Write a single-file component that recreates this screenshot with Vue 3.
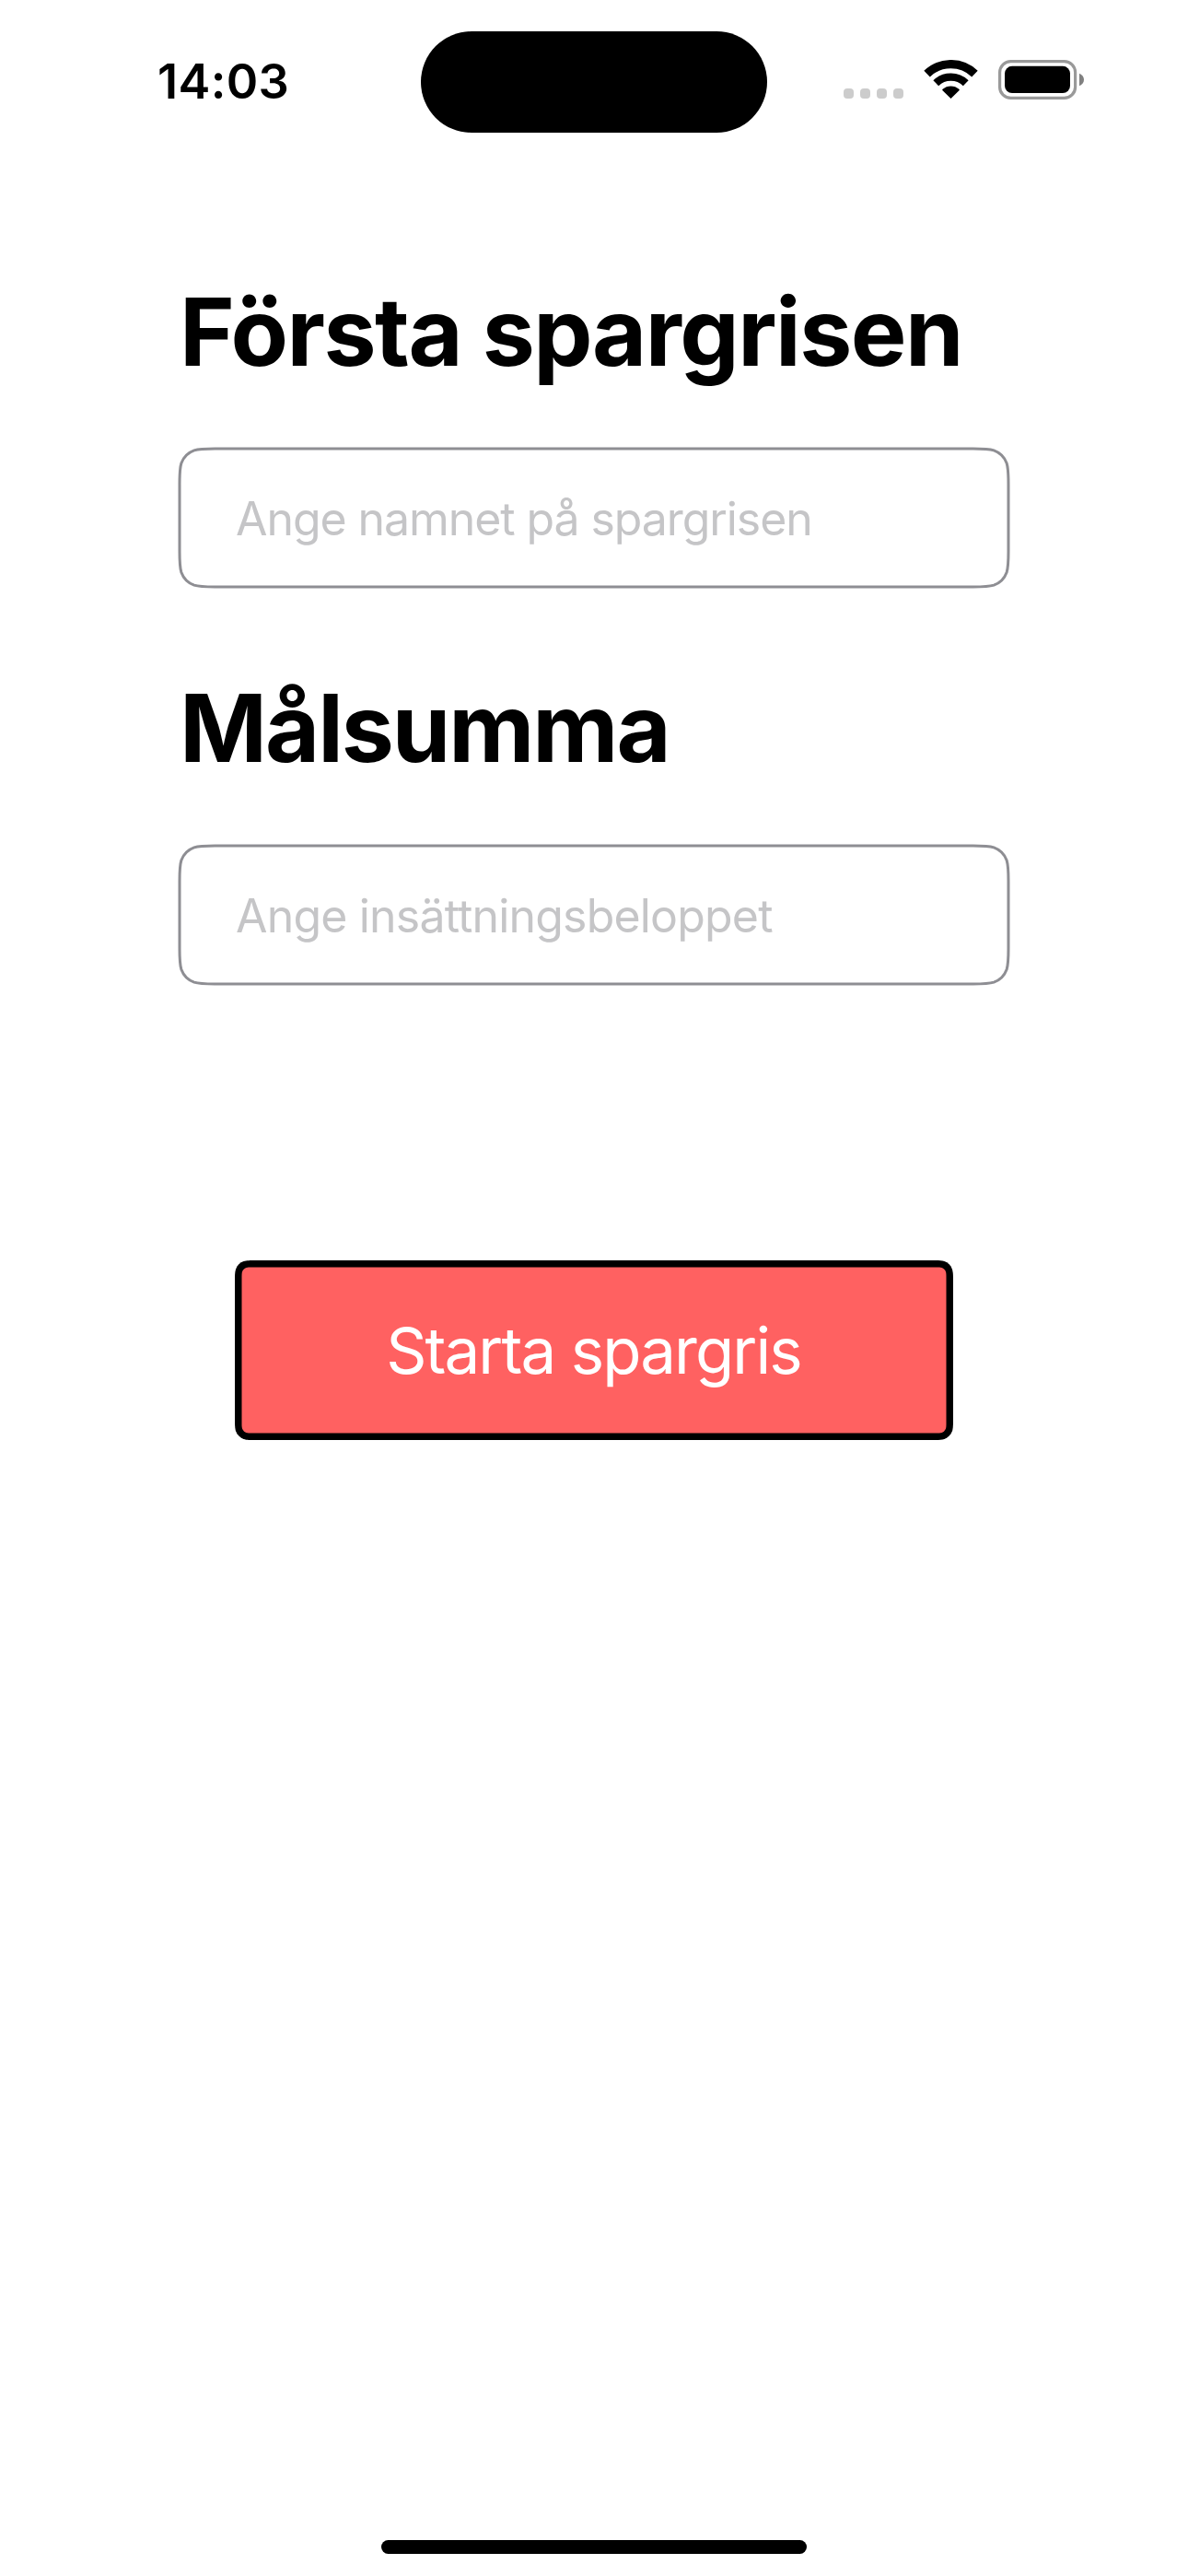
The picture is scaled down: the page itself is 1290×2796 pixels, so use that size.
<script setup>
// Rounded rectangle with continuous (smoothed) corners
function smoothRect(x, y, w, h, r) {
  const [a, b, c, d, e, f, g] = [1.528665, 1.088493, 0.868407, 0.631494, 0.372824, 0.16906, 0.074911].map((k) => k * r)
  const R = x + w
  const B = y + h
  return [
    `M${x + a} ${y}H${R - a}`,
    `C${R - b} ${y} ${R - c} ${y} ${R - d} ${y + g}`,
    `C${R - e} ${y + f} ${R - f} ${y + e} ${R - g} ${y + d}`,
    `C${R} ${y + c} ${R} ${y + b} ${R} ${y + a}V${B - a}`,
    `C${R} ${B - b} ${R} ${B - c} ${R - g} ${B - d}`,
    `C${R - f} ${B - e} ${R - e} ${B - f} ${R - d} ${B - g}`,
    `C${R - c} ${B} ${R - b} ${B} ${R - a} ${B}H${x + a}`,
    `C${x + b} ${B} ${x + c} ${B} ${x + d} ${B - g}`,
    `C${x + e} ${B - f} ${x + f} ${B - e} ${x + g} ${B - d}`,
    `C${x} ${B - c} ${x} ${B - b} ${x} ${B - a}V${y + a}`,
    `C${x} ${y + b} ${x} ${y + c} ${x + g} ${y + d}`,
    `C${x + f} ${y + e} ${x + e} ${y + f} ${x + d} ${y + g}`,
    `C${x + c} ${y} ${x + b} ${y} ${x + a} ${y}Z`,
  ].join('')
}

const fieldOutline = smoothRect(0, 0, 900, 150, 25)
const buttonOutline = smoothRect(0, 0, 780, 195, 15)
const buttonFace = smoothRect(7.5, 7.5, 765, 180, 7.5)
</script>

<template>
  <div class="screen">
    <header class="status">
      <span class="time">14:03</span>
      <span class="island"></span>
      <div class="indicators">
        <div class="dots"><i v-for="n in 4" :key="n"></i></div>
        <svg class="wifi" width="59" height="42" viewBox="0 0 59 42">
          <path d="M3.55 15.13A37.35 37.35 0 0 1 55.45 15.13" fill="none" stroke="#000" stroke-width="9.3" />
          <path d="M13.28 25.2A23.35 23.35 0 0 1 45.72 25.2" fill="none" stroke="#000" stroke-width="8.4" />
          <path d="M29.5 42L20.3 32.9Q20 32.3 20.6 31.8A13.5 13.5 0 0 1 38.4 31.8Q39 32.3 38.7 32.9Z" />
        </svg>
        <svg class="battery" width="94" height="43" viewBox="0 0 94 43">
          <rect x="1.6" y="1.6" width="82" height="39.8" rx="12" fill="none" stroke="#999" stroke-width="3.2" />
          <rect x="7" y="6.8" width="71" height="29.2" rx="8" />
          <path d="M88 14.7C91.2 16 93 18.500 93 21.500S91.200 27 88 28.300Z" fill="#808080" />
        </svg>
      </div>
    </header>

    <main class="form">
      <h1 class="title first">Första spargrisen</h1>
      <div class="field">
        <svg class="outline" width="900" height="150"><path :d="fieldOutline" /></svg>
        <span class="hint name">Ange namnet på spargrisen</span>
      </div>
      <h1 class="title goal">Målsumma</h1>
      <div class="field">
        <svg class="outline" width="900" height="150"><path :d="fieldOutline" /></svg>
        <span class="hint amount">Ange insättningsbeloppet</span>
      </div>
      <button class="start" type="button">
        <svg class="plate" width="780" height="195">
          <path :d="buttonOutline" fill="#000" />
          <path :d="buttonFace" fill="#ff6161" />
        </svg>
        <span class="label">Starta spargris</span>
      </button>
    </main>

    <div class="home"></div>
  </div>
</template>

<style>
body {
  background: #fff;
}
</style>

<style scoped>
.screen {
  box-sizing: border-box;
  width: 1290px;
  height: 2796px;
  padding-bottom: 24px;
  display: flex;
  flex-direction: column;
  background: #fff;
  color: #000;
  font-family: Inter, sans-serif;
  overflow: hidden;
}
.status {
  display: flex;
  align-items: flex-start;
  height: 177px;
  flex: none;
}
.time {
  width: 286px;
  margin-top: 56px;
  padding-left: 171px;
  line-height: 64px;
  font-size: 52.3px;
  font-weight: 600;
  letter-spacing: 0.35px;
  white-space: nowrap;
}
.island {
  width: 376px;
  height: 110px;
  margin-top: 34px;
  border-radius: 55px;
  background: #000;
}
.indicators {
  display: flex;
  align-items: flex-start;
  margin: 65px 0 0 83px;
}
.dots {
  display: flex;
  gap: 7px;
  margin-top: 31px;
}
.dots i {
  width: 11px;
  height: 11px;
  border-radius: 4px;
  background: #ccc;
}
.wifi {
  margin-left: 22px;
}
.battery {
  margin-left: 22px;
}
.form {
  width: 900px;
  margin-left: 195px;
  display: flex;
  flex-direction: column;
}
.title {
  margin: 0;
  line-height: 122px;
  font-size: 102px;
  font-weight: 700;
  white-space: nowrap;
}
.first {
  margin-top: 122px;
  letter-spacing: -1.52px;
}
.goal {
  margin-top: 92px;
  letter-spacing: -2.04px;
}
.field {
  position: relative;
  display: flex;
  align-items: center;
  height: 150px;
  margin-top: 66px;
  padding-left: 61px;
}
.goal + .field {
  margin-top: 67px;
}
.outline {
  position: absolute;
  inset: 0;
  overflow: visible;
  fill: none;
  stroke: #8e8e93;
  stroke-width: 3px;
}
.hint {
  line-height: 62px;
  padding-top: 2px;
  color: #c5c5c7;
  font-size: 50px;
  white-space: nowrap;
}
.name {
  letter-spacing: -1.08px;
}
.amount {
  letter-spacing: -0.82px;
}
.start {
  position: relative;
  display: flex;
  align-items: center;
  justify-content: center;
  width: 780px;
  height: 195px;
  margin: 300px auto 0;
  padding: 0;
  border: 0;
  background: none;
  color: #fff;
  font-family: inherit;
}
.plate {
  position: absolute;
  inset: 0;
}
.label {
  margin-right: 1px;
  z-index: 1;
  line-height: 84px;
  font-size: 69px;
  letter-spacing: -1.93px;
  white-space: nowrap;
}
.home {
  width: 462px;
  height: 15px;
  margin: auto auto 0;
  border-radius: 8px;
  background: #000;
}
</style>
